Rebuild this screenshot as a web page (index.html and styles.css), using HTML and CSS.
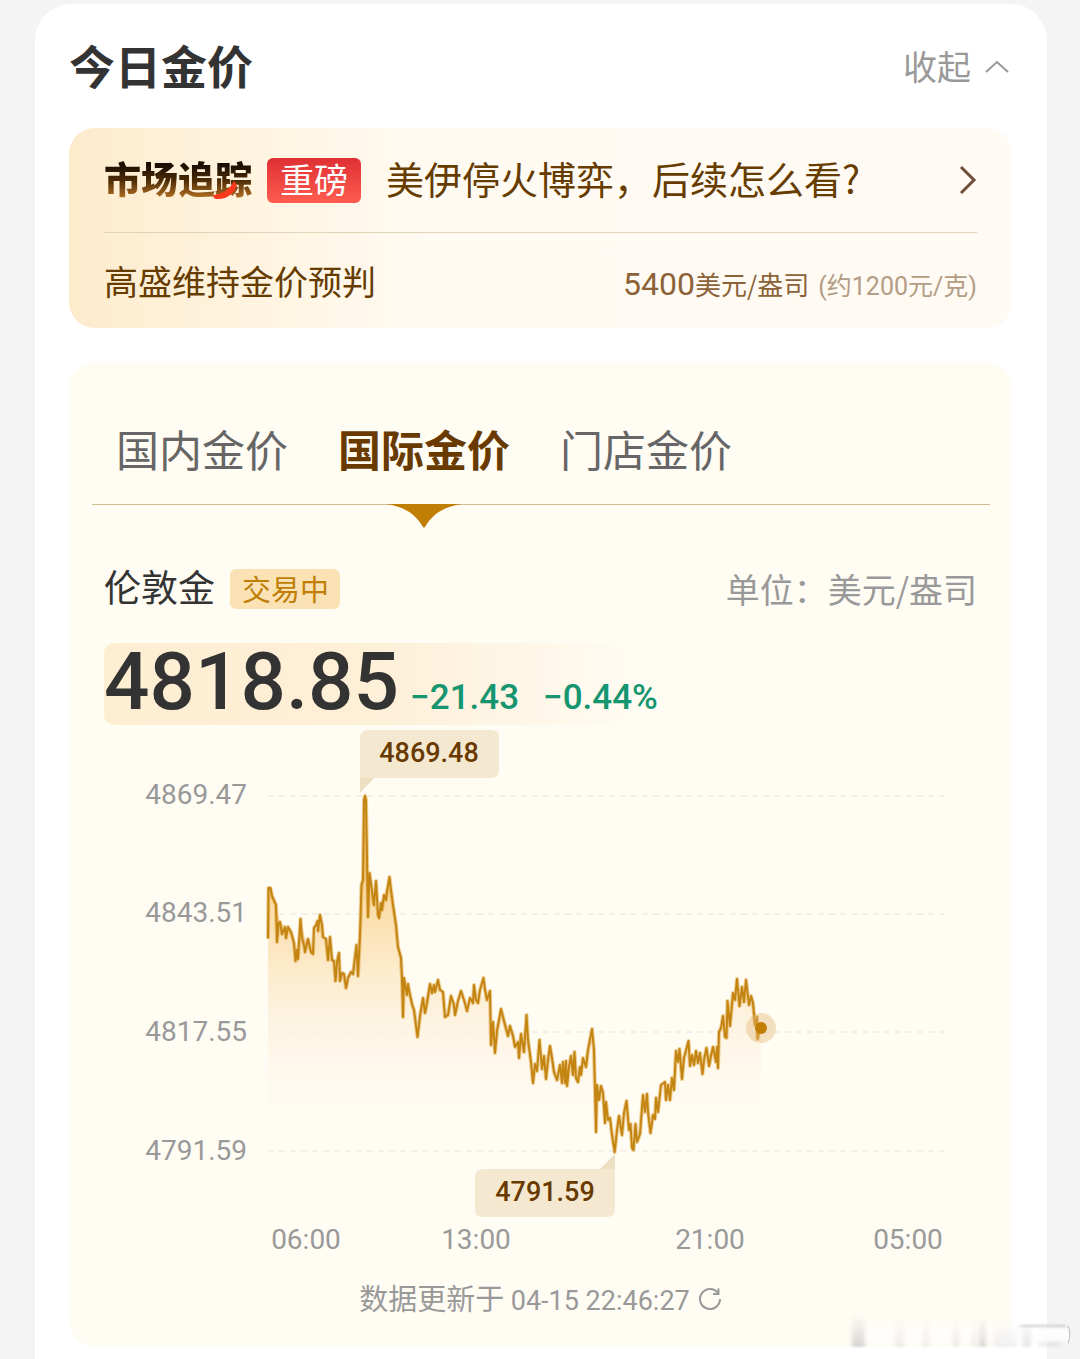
FILE: index.html
```html
<!DOCTYPE html>
<html lang="zh-CN">
<head>
<meta charset="utf-8">
<meta name="viewport" content="width=device-width, initial-scale=1">
<title>今日金价</title>
<link rel="stylesheet" href="styles.css">
</head>
<body>
<main class="card">
  <header class="card-header">
    <h1 class="card-title">今日金价</h1>
    <button class="collapse" type="button">收起
      <svg class="collapse-icon" viewBox="0 0 26 14" aria-hidden="true"><path d="M2 13 13 3 24 13"/></svg>
    </button>
  </header>

  <section class="banner">
    <a class="banner-top" href="#news">
      <span class="brand">市场追踪
        <svg class="brand-swoosh" viewBox="0 0 26 20" aria-hidden="true"><path d="M1 15C11 14 17 10 22 1L25 5C23 13 15 20 4 19Q1 18 1 15Z"/></svg>
      </span>
      <span class="tag-hot">重磅</span>
      <span class="headline">美伊停火博弈，后续怎么看?</span>
      <svg class="banner-arrow" viewBox="0 0 18 30" aria-hidden="true"><path d="M2 2 15 15 2 28"/></svg>
    </a>
    <div class="banner-bottom">
      <span class="forecast-name">高盛维持金价预判</span>
      <span class="forecast"><span class="forecast-num">5400</span><span class="forecast-unit">美元/盎司</span><span class="forecast-cny">(约1200元/克)</span></span>
    </div>
  </section>

  <section class="panel">
    <nav class="tabs">
      <button class="tab" type="button">国内金价</button>
      <button class="tab tab-active" type="button">国际金价
        <svg class="tab-marker" viewBox="0 0 76 24" aria-hidden="true"><path d="M0 0H76C56 3 46 11 39 23Q38 24 37 23C30 11 20 3 0 0Z"/></svg>
      </button>
      <button class="tab" type="button">门店金价</button>
    </nav>

    <div class="quote">
      <div class="quote-head">
        <h2 class="quote-name">伦敦金</h2>
        <span class="status">交易中</span>
        <span class="unit">单位：美元/盎司</span>
      </div>
      <div class="price-row">
        <strong class="price">4818.85</strong>
        <span class="change">−21.43</span>
        <span class="change change-pct">−0.44%</span>
      </div>
    </div>

    <svg class="chart" viewBox="69 725 943 540" role="img" aria-label="伦敦金走势">
      <defs>
        <linearGradient id="area" gradientUnits="userSpaceOnUse" x1="0" y1="796" x2="0" y2="1107">
          <stop offset="0" stop-color="#f8ce80"/>
          <stop offset=".35" stop-color="#fbdda8"/>
          <stop offset=".7" stop-color="#fdf0da" stop-opacity=".8"/>
          <stop offset="1" stop-color="#fef7ea" stop-opacity=".3"/>
        </linearGradient>
        <clipPath id="above"><rect x="260" y="780" width="520" height="327"/></clipPath>
        <path id="trend" d="M268 938 268.500 888 270.500 888 272 896 276 905 277 942 278.500 923 280 922 282 934 285 927 286 938 288 927 291 932 294 943 295.500 961 297 950 298 959 300.500 919 302 938 304 945 305 952 308 939 311 952 313 954 314 928 316 925 317.500 921 318 931 320 915 322 925 323 937 326 939 328 960 330 937 332 960 334 961 335.500 981 337 962 339 953 340 981 342 973 344 974 346 988 348 978 351 972 353 974 355 957 356.500 945 358 976 360 935 361.500 885 363 880 364 800 365 796 366 800 368 917 369.500 873 372 891 374 905 376 881 378 915 379 918 381 903 382 910 384 895 386 900 387 892 389.500 877 391 890 393 905 396 925 398 947 401 958 402 978 403 1017 404 978 407 995 408 984 410 995 412 1004 414 1010 417.500 1037 420 1016 423 998 425 1013 427 1003 430 984 432 993 434 985 435 992 438 980 440 990 443 992 445 1017 448 1015 451 996 454 1005 455 1015 458 1001 461 991 464 1000 467 1011 470 998 473 1003 474 985 476 1000 478 1003 480 990 483.500 978 485 990 487 1000 490 991 491 1045 493 1022 495 1053 497 1031 501 1009 504 1021 508 1036 510 1026 513 1036 515 1047 518 1042 519 1058 521 1034 524 1052 526.500 1015 528 1040 531 1062 533 1083 535 1064 537 1071 539.500 1040 542 1069 544 1056 546 1079 548 1060 550 1046 552 1058 554 1072 557 1080 560 1065 562 1083 563 1062 565 1083 566 1061 567 1086 569 1067 571 1056 573 1075 574.500 1052 576 1078 578 1082 580 1067 581 1075 583 1058 586 1067 588 1050 592 1029 594 1050 596 1132 597 1085 599 1100 601 1086 603 1093 605 1123 606 1102 608 1120 610 1118 612 1135 614.700 1152 617 1130 619 1116 622 1135 624 1113 626.500 1101 629 1130 630.500 1124 632 1148 633.500 1150 635.500 1124 637 1142 640 1134 643 1095 645 1112 647 1094 648 1112 650.500 1133 653 1115 655 1119 656 1098 658 1112 661 1085 665 1082 666 1100 668 1085 670 1100 672 1078 674 1090 676 1051 678 1062 679.500 1049 682 1079 684 1058 688.500 1041 690 1066 692 1055 694 1065 696 1051 698 1063 700 1053 702.500 1074 704 1060 706.500 1048 709 1066 711 1056 713 1047 716 1062 717 1047 718 1068 719 1032 721 1028 723 1016 725 1037 726.500 1038 727.500 1001 730 1026 733 993 735 1000 737 979 739.500 1006 742 987 744 1002 746 980 749 1005 751 996 753 1003 755 1025 757 1017 757.500 1039 760 1027"/>
      </defs>
      <g class="grid-lines">
        <path d="M268 796H944"/><path d="M268 914H944"/><path d="M268 1032H944"/><path d="M268 1151H944"/>
      </g>
      <g clip-path="url(#above)">
        <path fill="url(#area)" d="M268 1107 268 938 268.500 888 270.500 888 276 905 280 922 291 932 295.500 950 300.500 925 308 945 313 950 320 915 323 937 334 961 346 985 353 974 358 950 361.500 885 365 796 368 890 374 900 379 912 389.500 877 396 925 402 978 410 995 417.500 1035 423 1003 430 986 443 992 446 1015 451 1000 458 1005 467 1008 480 996 490 995 492 1040 501 1012 515 1040 527 1030 533 1075 550 1050 557 1078 574 1060 580 1072 592 1032 596 1107 665 1107 665 1090 676 1055 690 1055 702 1065 717 1055 723 1020 733 996 746 990 753 1003 757 1025 761 1027 761 1107Z"/>
      </g>
      <use href="#trend" class="trend-shade"/>
      <use href="#trend" class="trend-line"/>
      <circle class="now-halo" cx="761" cy="1028" r="15"/>
      <circle class="now-dot" cx="761" cy="1028" r="6"/>
      <g class="callout">
        <path class="callout-tail" d="M360 776H376L360 793Z"/>
        <path d="M368 730H491Q499 730 499 738V770Q499 778 491 778H360V738Q360 730 368 730Z"/>
        <text x="429" y="762">4869.48</text>
      </g>
      <g class="callout">
        <path class="callout-tail" d="M615 1171H598L615 1154Z"/>
        <path d="M483 1169H615V1209Q615 1217 607 1217H483Q475 1217 475 1209V1177Q475 1169 483 1169Z"/>
        <text x="545" y="1201">4791.59</text>
      </g>
      <g class="axis axis-y">
        <text x="247" y="804">4869.47</text>
        <text x="247" y="922">4843.51</text>
        <text x="247" y="1041">4817.55</text>
        <text x="247" y="1160">4791.59</text>
      </g>
      <g class="axis axis-x">
        <text x="306" y="1249">06:00</text>
        <text x="476" y="1249">13:00</text>
        <text x="710" y="1249">21:00</text>
        <text x="908" y="1249">05:00</text>
      </g>
    </svg>

    <footer class="updated">
      <span>数据更新于 <time class="updated-time">04-15 22:46:27</time></span>
      <button class="refresh" type="button" aria-label="刷新">
        <svg class="refresh-icon" viewBox="0 0 24 24" aria-hidden="true"><path d="M20 6A10 10 0 1 0 22 12M15 7H20.500V1.500"/></svg>
      </button>
    </footer>
  </section>
</main>

<svg class="watermark" viewBox="0 0 230 44" aria-hidden="true">
  <defs>
    <linearGradient id="fade" x1="0" y1="0" x2="0" y2="1"><stop offset="0" stop-color="#999" stop-opacity="0"/><stop offset="1" stop-color="#999" stop-opacity=".5"/></linearGradient>
    <filter id="soft" x="-10%" y="-20%" width="120%" height="140%"><feGaussianBlur stdDeviation="2 1"/></filter>
  </defs>
  <g filter="url(#soft)">
    <path fill="#fff" fill-opacity=".5" d="M12 16H218V31H12Z"/>
    <g fill="url(#fade)">
      <rect x="10" y="4" width="13" height="32" opacity=".8"/>
      <rect x="53" y="8" width="9" height="28" opacity=".35"/>
      <rect x="81" y="8" width="6" height="28" opacity=".35"/>
      <rect x="111" y="8" width="6" height="28" opacity=".4"/>
      <rect x="130" y="8" width="4" height="28" opacity=".4"/>
      <rect x="137" y="6" width="7" height="30" opacity=".8"/>
      <rect x="151" y="10" width="24" height="26" opacity=".3"/>
      <rect x="180" y="10" width="9" height="26" opacity=".5"/>
      <rect x="196" y="10" width="22" height="26" opacity=".3"/>
    </g>
    <path fill="none" stroke="#ccc" stroke-width="2" d="M178 15H224"/>
    <path fill="#fff" fill-opacity=".8" d="M194 18H227V30H194Z"/>
  </g>
  <path fill="none" stroke="#bbb" stroke-width="1" d="M226 15Q230 23 226 32"/>
</svg>
</body>
</html>
```
FILE: styles.css
```css
* { box-sizing: border-box; }

body {
  position: relative;
  min-height: 100vh;
  margin: 0;
  padding: 4px 33px 0 35px;
  display: flex;
  flex-direction: column;
  background: #f4f4f4;
  color: #333;
  font-family: "Noto Sans CJK SC", sans-serif;
}

button {
  padding: 0;
  border: 0;
  background: none;
  color: inherit;
  font: inherit;
}

svg { display: block; }

.card {
  flex: 1;
  padding: 0 35px 13px 34px;
  border-radius: 36px 36px 0 0;
  background: #fff;
}

.card-header {
  display: flex;
  align-items: center;
  justify-content: space-between;
  height: 124px;
}

.card-title { margin: 0; padding-bottom: 4px; font-size: 46px; line-height: 60px; font-weight: 700; }

.collapse {
  display: flex;
  align-items: center;
  gap: 13px;
  color: #999;
  font-size: 34px;
  line-height: 48px;
}
.collapse-icon { width: 26px; height: 14px; margin-right: 2px; }
.collapse-icon path { fill: none; stroke: #999; stroke-width: 2; }

.banner {
  padding: 0 35px;
  border-radius: 26px;
  background: linear-gradient(90deg, #fdebcd 0%, #fff5e2 22%, #fffaf2 38%, #fffaf3 100%);
  color: #663c00;
}
.banner-top {
  display: flex;
  align-items: center;
  height: 105px;
  border-bottom: 1px solid #e0d3b8;
  color: inherit;
  text-decoration: none;
}
.brand {
  position: relative;
  padding-bottom: 4px;
  font-size: 37px;
  line-height: 44px;
  font-weight: 900;
  background: linear-gradient(180deg, #1c0f02 20%, #4a2a06 50%, #b87425 90%);
  -webkit-background-clip: text;
  background-clip: text;
  color: transparent;
}
.brand-swoosh { position: absolute; right: 14px; bottom: 4px; width: 26px; height: 20px; }
.brand-swoosh path { fill: #f93a1c; }
.tag-hot {
  margin: 0 25px 0 15px;
  padding: 0 13px 4px;
  border-radius: 6px;
  background: linear-gradient(180deg, #df3034, #ff5c50);
  color: #fff;
  font-size: 34px;
  line-height: 41px;
}
.headline { padding-bottom: 4px; font-size: 38px; line-height: 52px; white-space: nowrap; }
.banner-arrow { width: 18px; height: 30px; margin-left: auto; }
.banner-arrow path { fill: none; stroke: #70503c; stroke-width: 3; }

.banner-bottom {
  display: flex;
  align-items: center;
  justify-content: space-between;
  height: 95px;
}
.forecast-name { font-size: 34px; line-height: 48px; }
.forecast { display: flex; align-items: baseline; padding-top: 10px; color: #8c6238; font-size: 26px; line-height: 40px; }
.forecast-num { font-family: Roboto, sans-serif; font-size: 32px; }
.forecast-cny { margin-left: 9px; color: #b39d85; font-family: Roboto, "Noto Sans CJK SC", sans-serif; font-size: 25px; }

.panel {
  margin-top: 34px;
  padding-bottom: 13px;
  border-radius: 26px;
  background: #fffcf4;
}
.tabs {
  display: flex;
  gap: 50px;
  margin: 0 22px 0 23px;
  padding: 30px 24px 0;
  border-bottom: 1px solid #d1be8f;
}
.tab { position: relative; height: 112px; color: #666; font-size: 43px; line-height: 60px; }
.tab-active { color: #693a00; font-weight: 700; }
.tab-marker { position: absolute; left: 50%; top: 100%; width: 76px; height: 24px; margin-left: -38px; }
.tab-marker path { fill: #c17e05; }

.quote { padding: 64px 35px 0; }
.quote-head { display: flex; align-items: center; height: 40px; }
.quote-name { margin: 0; padding-bottom: 6px; font-size: 37px; line-height: 40px; font-weight: 400; }
.status {
  margin-left: 15px;
  padding: 0 11px 2px 12px;
  border-radius: 6px;
  background: #fae2b5;
  color: #c17e05;
  font-size: 29px;
  line-height: 38px;
}
.unit { margin-left: auto; color: #999; font-size: 34px; line-height: 40px; }
.price-row {
  display: flex;
  align-items: baseline;
  height: 82px;
  margin-top: 34px;
  border-radius: 10px;
  background: linear-gradient(90deg, #feeed2 0%, #feefd7 30%, #fffcf4 62%);
  font-family: Roboto, sans-serif;
  font-weight: 500;
}
.price { font-size: 80px; line-height: 78px; font-weight: 500; }
.change { margin-left: 11px; padding-bottom: 2px; color: #159570; font-size: 35px; line-height: 40px; }
.change-pct { margin-left: 24px; }

.chart { width: 100%; height: auto; font-family: Roboto, sans-serif; }
.grid-lines path { fill: none; stroke: #f3f0e9; stroke-width: 2; stroke-dasharray: 6 5; }
.trend-line { fill: none; stroke: #c38412; stroke-width: 2; stroke-linejoin: round; stroke-linecap: round; }
.trend-shade { fill: none; stroke: #dc9f34; stroke-opacity: .5; stroke-width: 4; stroke-linejoin: round; }
.now-halo { fill: #e2b774; fill-opacity: .4; }
.now-dot { fill: #c17e05; }
.callout path { fill: #f5e8d0; }
.callout text { fill: #693a00; font-size: 27px; font-weight: 500; text-anchor: middle; }
.callout .callout-tail { fill: #eddfc2; }
.axis text { fill: #999; font-size: 28px; }
.axis-y text { text-anchor: end; }
.axis-x text { text-anchor: middle; }

.updated {
  display: flex;
  align-items: center;
  justify-content: center;
  gap: 8px;
  height: 68px;
  color: #999;
  font-size: 29px;
  line-height: 40px;
}
.updated-time { font-family: Roboto, sans-serif; font-size: 27px; }
.refresh-icon { width: 24px; height: 24px; }
.refresh-icon path { fill: none; stroke: #999; stroke-width: 2; }

.watermark { position: absolute; right: 8px; bottom: 4px; width: 230px; height: 44px; }
```
